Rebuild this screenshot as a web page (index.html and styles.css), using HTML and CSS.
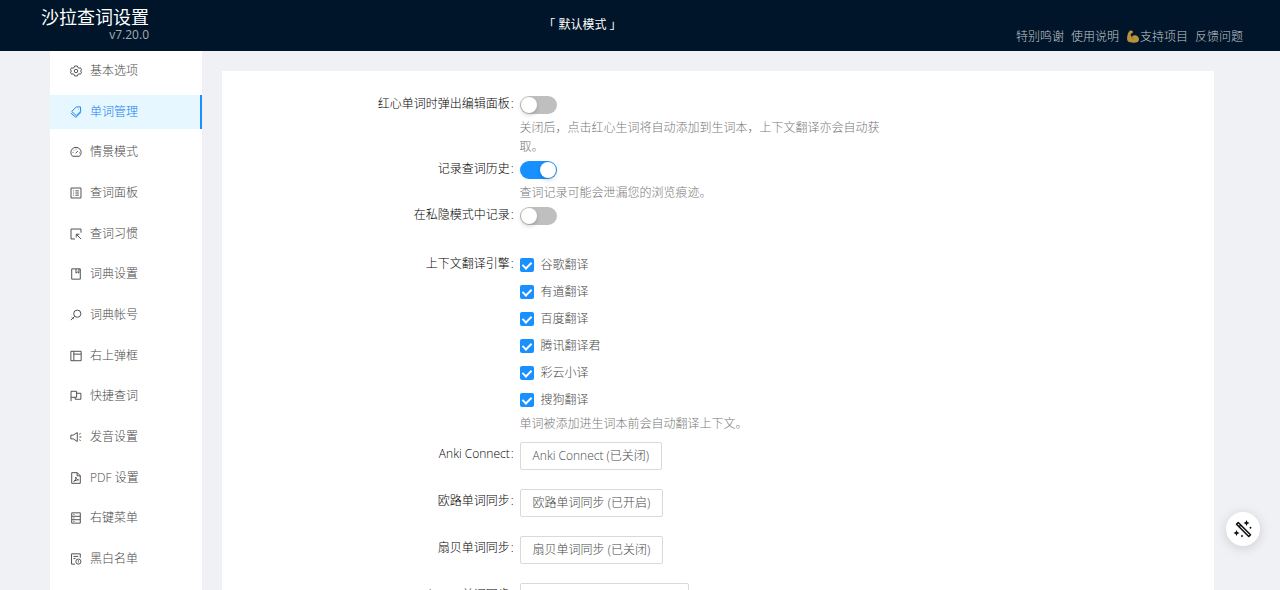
FILE: index.html
```html
<!DOCTYPE html>
<html lang="zh-CN">
<head>
<meta charset="utf-8">
<title>沙拉查词设置</title>
<link rel="stylesheet" href="styles.css">
</head>
<body>
<header class="header">
  <div class="brand">
    <h1 class="brand-title">沙拉查词设置</h1>
    <span class="brand-version">v7.20.0</span>
  </div>
  <div class="profile">「 默认模式 」</div>
  <nav class="links">
    <a href="#thanks">特别鸣谢</a>
    <a href="#manual">使用说明</a>
    <a href="#support"><svg class="arm" viewBox="0 0 24 24" aria-hidden="true"><path fill="#b8923a" d="M6 1.500c2-.8 4.500-.6 5.500.8.8 1.200.2 2.700-.8 3.700-.8.700-2 .6-2.700 1.500-.6 1.500.4 4 1.800 5.300 1.300-2.300 4-3.500 6.700-3 4 .6 6.700 3.700 6.700 7.700 0 4.300-4 6-9.400 6-5.300 0-12-1-12.600-6C.7 12 2.800 4 6 1.500z"/><path fill="none" stroke="#7d6020" d="M10 13c.2 2 1.400 3.300 3.200 3.600"/></svg>支持项目</a>
    <a href="#feedback">反馈问题</a>
  </nav>
</header>
<div class="layout">
  <nav class="menu">
    <a class="item" href="#general"><svg class="icon" viewBox="0 0 14 14"><path d="M5.400 1.200h3.200l.5 1.700 1.400.8 1.700-.4 1.300 2.300L12.300 7l1.200 1.400-1.300 2.300-1.700-.4-1.400.8-.5 1.700H5.400l-.5-1.700-1.400-.8-1.700.4L.5 8.400 1.700 7 .5 5.600l1.300-2.300 1.700.4 1.400-.8z"/><circle cx="7" cy="7" r="2"/></svg>基本选项</a>
    <a class="item active" href="#notebook"><svg class="icon" viewBox="0 0 14 14"><path d="M7.300 1.200l4.800-.2.400 4.900-5.200 5.300L2 6.400z"/><path d="M1 8.300l5.800 5 6.300-6.200"/><path d="M9.500 3.800h.6"/></svg>单词管理</a>
    <a class="item" href="#profiles"><svg class="icon" viewBox="0 0 14 14"><path d="M3 12a6 6 0 1 1 8 0z"/><path d="M6.500 8.500l2.700-2.700M7 3v1M3 7.500h1M10.500 8h.8M4 4.600l.6.600"/></svg>情景模式</a>
    <a class="item" href="#panel"><svg class="icon" viewBox="0 0 14 14"><path d="M1.200 1.200h11.600v11.600H1.200z"/><path d="M3.800 4.500h1M3.800 7h1M3.800 9.500h1M6.300 4.500h4M6.300 7h4M6.300 9.500h4"/></svg>查词面板</a>
    <a class="item" href="#modes"><svg class="icon" viewBox="0 0 14 14"><path d="M12.800 5.500V1.200H1.200v11.600h4.600"/><path d="M12.800 12.800L7.800 7.800M7.300 11V7.300H11"/></svg>查词习惯</a>
    <a class="item" href="#dictionaries"><svg class="icon" viewBox="0 0 14 14"><path d="M2 1h10v12H2z"/><path d="M7 1v5l1.700-1.300L10.400 6V1"/></svg>词典设置</a>
    <a class="item" href="#auths"><svg class="icon" viewBox="0 0 14 14"><circle cx="8.500" cy="5.500" r="4.200"/><path d="M5.500 8.500L1 13M2.300 9.800l2 2"/></svg>词典帐号</a>
    <a class="item" href="#popup"><svg class="icon" viewBox="0 0 14 14"><path d="M1 1.500h12v11H1zM4.500 1.500v11M4.500 4.800H13"/></svg>右上弹框</a>
    <a class="item" href="#quick"><svg class="icon" viewBox="0 0 14 14"><path d="M1.200 13V1.500h6.500v7H1.200"/><path d="M7.700 3.800h5v7H6V8.500"/></svg>快捷查词</a>
    <a class="item" href="#sound"><svg class="icon" viewBox="0 0 14 14"><path d="M1 4.800h2.800L8.500 1.800v10.400L3.800 9.200H1z"/><path d="M11 7h2.300M10.800 3.800l1.600-1M10.800 10.200l1.600 1"/></svg>发音设置</a>
    <a class="item" href="#pdf"><svg class="icon" viewBox="0 0 14 14"><path d="M2 .8h6.500L12 4.300v8.900H2zM8.300.8v3.700H12"/><path d="M4.300 11c1.700-.8 2.700-3 2.500-5 .5 2 1.500 3 3.200 3.200-2 0-4 .6-5.700 1.800z"/></svg>PDF 设置</a>
    <a class="item" href="#context"><svg class="icon" viewBox="0 0 14 14"><path d="M2 1h10v12H2zM2 5h10M2 9h10"/><path d="M4 3h1.200M4 7h1.200M4 11h1.200"/></svg>右键菜单</a>
    <a class="item" href="#lists"><svg class="icon" viewBox="0 0 14 14"><path d="M12 5.500V1H1.800v12h4"/><path d="M4 4h5.500M4 6.500h2.500"/><circle cx="9.800" cy="10" r="3"/><path d="M9.800 8.500v1.700M9.800 11v.6"/></svg>黑白名单</a>
  </nav>
  <main class="card">
    <form class="form">
      <div class="row">
        <label class="label" for="edit">红心单词时弹出编辑面板</label>
        <div class="control">
          <input class="switch" type="checkbox" role="switch" id="edit">
          <p class="help">关闭后，点击红心生词将自动添加到生词本，上下文翻译亦会自动获取。</p>
        </div>
      </div>
      <div class="row">
        <label class="label" for="history">记录查词历史</label>
        <div class="control">
          <input class="switch" type="checkbox" role="switch" id="history" checked>
          <p class="help">查词记录可能会泄漏您的浏览痕迹。</p>
        </div>
      </div>
      <div class="row spaced">
        <label class="label" for="private">在私隐模式中记录</label>
        <div class="control">
          <input class="switch" type="checkbox" role="switch" id="private">
        </div>
      </div>
      <div class="row engines" role="group" aria-labelledby="engines">
        <span class="label" id="engines">上下文翻译引擎</span>
        <div class="control">
          <div class="checks">
            <label class="check"><input type="checkbox" checked>谷歌翻译</label>
            <label class="check"><input type="checkbox" checked>有道翻译</label>
            <label class="check"><input type="checkbox" checked>百度翻译</label>
            <label class="check"><input type="checkbox" checked>腾讯翻译君</label>
            <label class="check"><input type="checkbox" checked>彩云小译</label>
            <label class="check"><input type="checkbox" checked>搜狗翻译</label>
          </div>
          <p class="help">单词被添加进生词本前会自动翻译上下文。</p>
        </div>
      </div>
      <div class="row action">
        <label class="label" for="anki">Anki Connect</label>
        <button class="button" type="button" id="anki">Anki Connect (已关闭)</button>
      </div>
      <div class="row action">
        <label class="label" for="eudic">欧路单词同步</label>
        <button class="button" type="button" id="eudic">欧路单词同步 (已开启)</button>
      </div>
      <div class="row action">
        <label class="label" for="shanbay">扇贝单词同步</label>
        <button class="button" type="button" id="shanbay">扇贝单词同步 (已关闭)</button>
      </div>
      <div class="row action">
        <label class="label" for="webdav">WebDAV 单词同步</label>
        <button class="button" type="button" id="webdav">WebDAV 单词同步 (已关闭)</button>
      </div>
    </form>
  </main>
</div>
<button class="fab" type="button" aria-label="魔法棒">
  <svg viewBox="0 0 20 20"><path d="M3.500 5.200l1.700-1.700 12.300 12.300-1.700 1.700zM6 7.800l1.800-1.800"/><path class="spark" d="M13.500 1l.9 2.100 2.100.9-2.100.9-.9 2.100-.9-2.100-2.100-.9 2.100-.9zM3.500 11l.9 2.100 2.100.9-2.100.9-.9 2.100-.9-2.100L.5 14l2.100-.9zM17.500 7.500l1.200 1.200-1.200 1.200-1.200-1.200zM9 15.800l1.200 1.200L9 18.200 7.800 17z"/></svg>
</button>
</body>
</html>
```
FILE: styles.css
```css
* { box-sizing: border-box; }

body {
  margin: 0;
  height: 100vh;
  overflow: hidden;
  display: flex;
  flex-direction: column;
  background: #eff1f5;
  color: #484848;
  font: 12px/20px "Open Sans", "Noto Sans CJK SC", sans-serif;
  font-weight: 300;
}

a { color: inherit; text-decoration: none; }

.header {
  flex: none;
  display: flex;
  justify-content: space-between;
  height: 51px;
  padding: 0 37px 0 41px;
  background: #001529;
  color: #fff;
}

.brand {
  display: flex;
  flex-direction: column;
  align-items: flex-end;
  padding-top: 6px;
}

.brand-title {
  margin: 0;
  font-size: 18px;
  line-height: 22px;
  font-weight: 400;
}

.brand-version { line-height: 14px; color: #a6adb4; font-weight: 400; }

.profile { padding-top: 15px; font-weight: 400; }

.links {
  display: flex;
  gap: 7px;
  padding-top: 22px;
  color: #c2c8ce;
}

.links a { display: flex; align-items: center; }
.arm { width: 14px; height: 13px; }

.layout {
  flex: 1;
  min-height: 0;
  display: flex;
  padding: 0 66px 0 50px;
}

.menu {
  flex: none;
  width: 152px;
  margin-right: 20px;
  padding: 3px 0 14px;
  display: flex;
  flex-direction: column;
  justify-content: space-between;
  background: #fff;
}

.item {
  display: flex;
  align-items: center;
  gap: 8px;
  height: 34px;
  padding-left: 20px;
}

.item.active {
  background: #e6f7ff;
  color: #1080f0;
  border-right: 2px solid #1890ff;
}

.icon {
  width: 12px;
  height: 12px;
  fill: none;
  stroke: currentColor;
  stroke-width: 1.1;
}

.card {
  flex: 1;
  margin-top: 20px;
  padding-top: 21px;
  background: #fff;
  overflow: hidden;
}

.form { display: flex; flex-direction: column; }

.row {
  display: grid;
  grid-template-columns: 30% 37%;
  align-items: start;
}

.label {
  justify-self: end;
  padding: 2px 6px 0 0;
  color: #000;
}

.label::after { content: ":"; margin-left: 1px; }

.control { padding-top: 4px; }
.spaced { margin-bottom: 27px; }
.engines { margin-bottom: 8px; }
.engines .control { padding-top: 3px; }
.action { margin-bottom: 19px; }

.switch {
  appearance: none;
  display: block;
  width: 37px;
  height: 18px;
  margin: 0;
  padding: 1px;
  border-radius: 9px;
  background: #bfbfbf;
}

.switch::after {
  content: "";
  display: block;
  width: 16px;
  height: 16px;
  border-radius: 50%;
  background: #fff;
  box-shadow: 0 2px 4px rgba(0, 35, 11, 0.2);
}

.switch:checked { background: #1890ff; }
.switch:checked::after { margin-left: auto; }

.help {
  margin: 4px 0 1px;
  line-height: 19px;
  color: #787878;
}

.checks { display: flex; flex-direction: column; gap: 7px; }
.check { display: flex; align-items: center; gap: 7px; }

.check input {
  appearance: none;
  display: grid;
  place-items: center;
  width: 14px;
  height: 14px;
  margin: 0;
  border-radius: 2px;
  background: #1890ff;
}

.check input:checked::after {
  content: "";
  width: 4px;
  height: 7px;
  margin-bottom: 2px;
  border: solid #fff;
  border-width: 0 2px 2px 0;
  transform: rotate(45deg);
}

.button {
  justify-self: start;
  height: 28px;
  padding: 0 12px;
  border: 1px solid #d9d9d9;
  border-radius: 2px;
  background: #fff;
  color: #484848;
  font: inherit;
}

.fab {
  position: fixed;
  right: 20px;
  bottom: 44px;
  display: grid;
  place-items: center;
  width: 34px;
  height: 34px;
  padding: 0;
  border: 0;
  border-radius: 50%;
  background: #fff;
  box-shadow: 0 2px 12px rgba(0, 0, 0, 0.15);
}

.fab svg { width: 20px; height: 20px; fill: none; stroke: #111; stroke-width: 1.6; stroke-linejoin: round; }
.fab .spark { fill: #111; stroke: none; }
```
